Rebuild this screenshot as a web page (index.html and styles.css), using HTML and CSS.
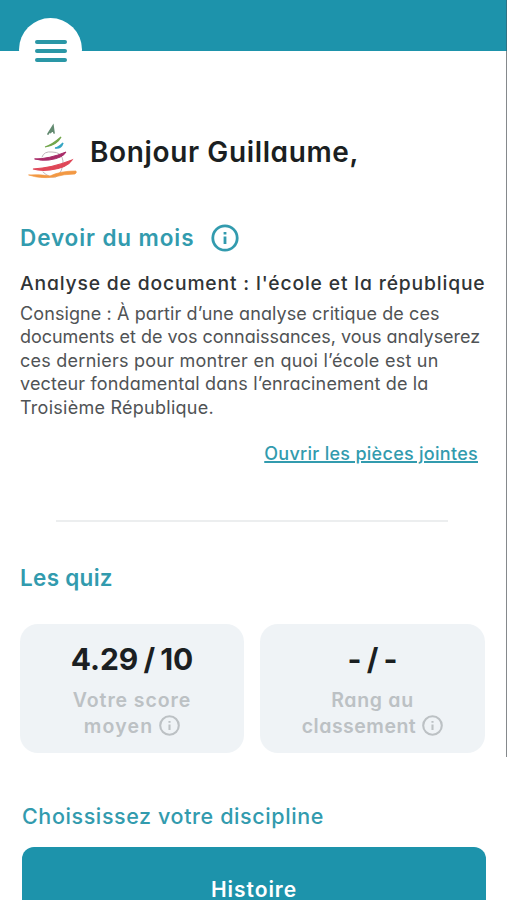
FILE: index.html
```html
<!DOCTYPE html>
<html lang="fr">
<head>
<meta charset="utf-8">
<title>Accueil</title>
<link rel="stylesheet" href="styles.css">
</head>
<body>
<header class="topbar"><button class="menu" aria-label="Menu"><i></i><i></i><i></i></button></header>
<main class="page">
  <div class="greeting">
    <svg class="logo" viewBox="0 0 100 75" width="100" height="75" fill="none" stroke-linecap="round">
      <path d="M33 19L38 11L39 18M38 12L35 18L38 15" stroke="#628a70" stroke-width="1.7"/>
      <path d="M30 32Q37 30 46 22Q42 30 30 32Z" fill="#72a64b" stroke="#72a64b" stroke-width="1.2"/>
      <path d="M40 33Q43 33 48 28Q46 34 40 33Z" fill="#35a5c3" stroke="#35a5c3" stroke-width="1.4"/>
      <path d="M27 42Q29 36 37 37Q47 37 48 46Q48 57 41 62Q34 63 28 57" stroke="#c1b7bc" stroke-width="1"/>
      <path d="M20 44Q34 44 51 37Q48 43 34 45Q26 46 20 44Z" fill="#a82b68" stroke="#a82b68" stroke-width="1"/>
      <path d="M18 54Q37 53 57 45Q52 53 35 55Q25 56 18 54Z" fill="#df4758" stroke="#df4758" stroke-width="1.2"/>
      <path d="M14 60Q24 59 35 61Q45 56 61 56Q62 58 60 59Q49 59 39 62Q25 64 14 60Z" fill="#f29843" stroke="#f29843" stroke-width=".7"/>
    </svg>
    <h1 class="hello">Bonjour Guillaume,</h1>
  </div>
  <section class="homework">
    <h2><span class="month">Devoir du mois</span>
      <svg class="info big" viewBox="0 0 28 28"><circle cx="14" cy="14" r="12.2"/><path d="M14 12.5V20M14 8V10.4"/></svg></h2>
    <h3>Analyse de document : l'école et la république</h3>
    <p><span class="l1">Consigne : À partir d’une analyse critique de ces</span>
      <span class="l2">documents et de vos connaissances, vous analyserez</span>
      <span class="l3">ces derniers pour montrer en quoi l’école est un</span>
      <span class="l4">vecteur fondamental dans l’enracinement de la</span>
      <span class="l5">Troisième République.</span></p>
    <a class="files">Ouvrir les pièces jointes</a>
  </section>
  <hr>
  <h2 class="quiz">Les quiz</h2>
  <div class="cards">
    <div class="card"><strong>4.29 / 10</strong>
      <div class="label wide">Votre score</div>
      <div class="label"><span class="wider">moyen</span><svg class="info" viewBox="0 0 28 28"><circle cx="14" cy="14" r="12.4"/><path d="M14 12.5V20M14 8V10.4"/></svg></div></div>
    <div class="card"><strong>- / -</strong>
      <div class="label">Rang au</div>
      <div class="label"><span class="tight">classement</span><svg class="info" viewBox="0 0 28 28"><circle cx="14" cy="14" r="12.4"/><path d="M14 12.5V20M14 8V10.4"/></svg></div></div>
  </div>
  <h2 class="choose">Choississez votre discipline</h2>
  <button class="subject">Histoire</button>
</main>
</body>
</html>
```
FILE: styles.css
```css
* { box-sizing: border-box; }
body { margin: 0; height: 900px; overflow: hidden; background: #fff; color: #1b1f22; font-family: Inter, sans-serif; font-feature-settings: "cv11"; }
h1, h2, h3, p { margin: 0; white-space: nowrap; }
.topbar { height: 51px; padding: 18px 0 0 19px; border-right: 1px solid #2c7385; background: #1d93ab; }
.menu { display: flex; flex-direction: column; align-items: center; gap: 5px; width: 63px; height: 63px; padding: 22px 0 0; border: 0; border-radius: 50%; background: #fff; }
.menu i { width: 32px; height: 4px; border-radius: 2px; background: #2a97a6; }
.page { height: 706px; border-right: 1px solid #85898c; }
.greeting { display: flex; padding: 64px 0 0 15px; height: 139px; }
.logo { flex: none; margin-right: -25px; }
.hello { font-size: 28px; line-height: 75px; font-weight: 600; letter-spacing: .63px; }
h2 { display: flex; align-items: center; gap: 17px; font-size: 22.5px; line-height: 32px; font-weight: 600; color: #329bae; }
.month { letter-spacing: .9px; }
.info { flex: none; width: 21px; height: 21px; fill: none; stroke: currentColor; stroke-width: 2.8; }
.info.big { width: 28px; height: 28px; }
.homework { padding: 32px 0 0 20px; }
h3 { margin-top: 14px; font-size: 19.3px; line-height: 30px; font-weight: 500; letter-spacing: .84px; color: #303436; }
p { margin-top: 4px; font-size: 18px; line-height: 23.4px; color: #505355; }
p span { display: table; }
.l1 { letter-spacing: .1px; }
.l2 { letter-spacing: -.03px; }
.l3 { letter-spacing: .25px; }
.l4 { letter-spacing: .16px; }
.l5 { letter-spacing: .26px; }
.files { display: block; margin: 22px 28px 0 0; text-align: right; font-size: 18px; line-height: 26px; font-weight: 500; letter-spacing: .28px; color: #329bae; text-decoration: underline; text-decoration-thickness: 1.5px; }
hr { width: 392px; height: 2px; margin: 53px 0 0 56px; border: 0; background: #eceeef; }
.quiz { margin: 40px 0 0 20px; letter-spacing: .3px; }
.cards { display: grid; grid-template-columns: 224px 225px; gap: 16px; margin: 30px 0 0 20px; }
.card { height: 129px; padding-top: 17px; border-radius: 18px; background: #eff3f6; text-align: center; }
.card strong { display: block; margin-bottom: 10px; font-size: 30px; line-height: 36px; font-weight: 700; word-spacing: -2px; }
.label { display: flex; justify-content: center; align-items: center; gap: 6px; font-size: 19.5px; line-height: 26px; font-weight: 600; letter-spacing: .7px; color: #bcc1c4; }
.label .info { margin-top: -2px; }
.wide { letter-spacing: .9px; }
.wider { letter-spacing: 1.2px; }
.tight { letter-spacing: .5px; }
.choose { margin: 47px 0 0 22px; font-size: 21.5px; font-weight: 500; letter-spacing: .6px; }
.subject { display: block; width: 464px; height: 84px; margin: 15px 0 0 22px; padding: 2px 0 0; border: 0; border-radius: 12px; background: #1d93ab; color: #fff; font: 600 21px/26px Inter, sans-serif; letter-spacing: .95px; }
```
